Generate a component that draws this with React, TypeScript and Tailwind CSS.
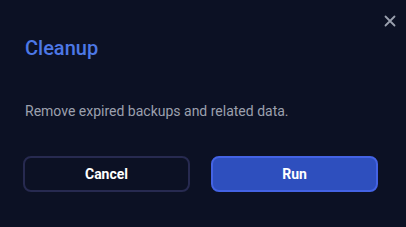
import React from 'react';

const App: React.FC = () => {
    return (
        <div className="relative w-[406px] h-[227px] bg-[#0c1124] px-[23px] pt-[34px] font-['Roboto',sans-serif]">
            {/* Close */}
            <button className="absolute top-[14px] right-[9px] w-[14px] h-[14px] flex items-center justify-center text-[#9aa0ae]">
                <svg width="12" height="12" viewBox="0 0 12 12" fill="none">
                    <path d="M1.5 1.5L10.5 10.5M10.5 1.5L1.5 10.5" stroke="currentColor" strokeWidth="1.8" strokeLinecap="round" />
                </svg>
            </button>

            <h2 className="pl-[2px] text-[20px] leading-[28px] font-medium text-[#4d78e6]">Cleanup</h2>

            <p className="pl-[2px] mt-[39px] text-[14px] leading-[20px] text-[#9ca0ae]">
                Remove expired backups and related data.
            </p>

            <div className="mt-[35px] flex gap-[21px]">
                <button className="w-[167px] h-[36px] rounded-[8px] border-2 border-[#272a50] bg-transparent text-white text-[14px] font-bold">
                    Cancel
                </button>
                <button className="w-[167px] h-[36px] rounded-[8px] border-2 border-[#4463e4] bg-[#2e4fbe] text-white text-[14px] font-bold">
                    Run
                </button>
            </div>
        </div>
    );
};

export default App;
